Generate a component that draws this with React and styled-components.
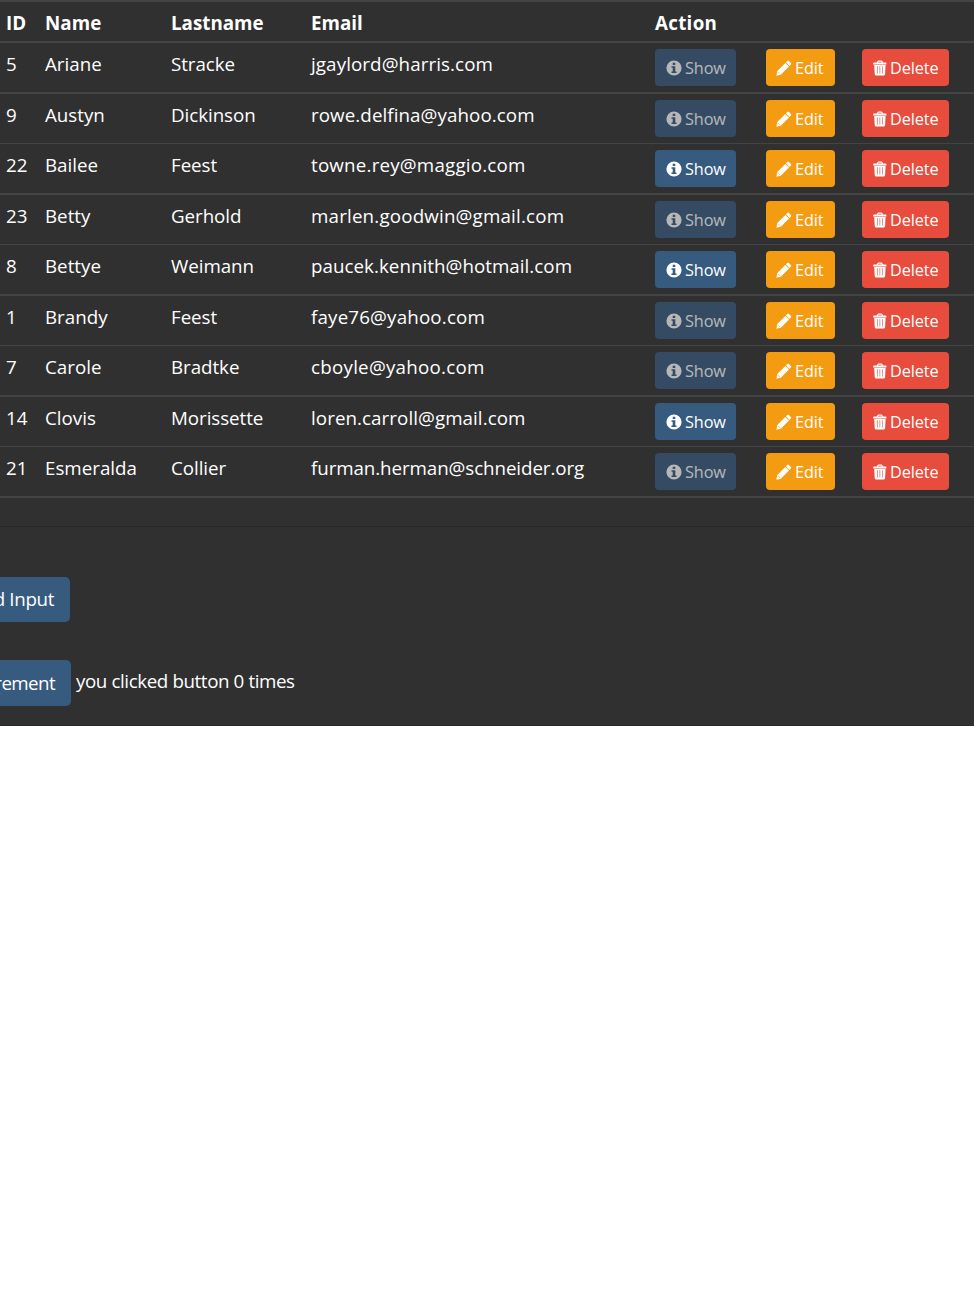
import React, { useState } from 'react';
import styled, { createGlobalStyle, css } from 'styled-components';

const GlobalStyle = createGlobalStyle`
  *, *::before, *::after { box-sizing: border-box; }
  html, body { margin: 0; padding: 0; background: #fff; }
  body {
    font-family: 'Segoe UI', 'Open Sans', 'Noto Sans', sans-serif;
    font-size: 18.75px;
    line-height: 27px;
    color: #fff;
    overflow: hidden;
  }
`;

const Page = styled.main`
  height: 726px;
  background: #303030;
  border-bottom: 1px solid #282828;
  overflow: hidden;
`;

const Table = styled.div`
  border-top: 2px solid #444;
`;

const Row = styled.div`
  display: grid;
  grid-template-columns: 39px 126px 140px 344px 111px 96px 1fr;
  height: ${(p) => 49 + p.$line}px;
  border-bottom: ${(p) => p.$line}px solid #444;
`;

const HeaderRow = styled(Row)`
  height: 41px;
  font-weight: 700;
`;

const Cell = styled.div`
  padding: 7px 0 0 6px;
  white-space: nowrap;
  letter-spacing: ${(p) => p.$track || 0}px;
`;

const ActionCell = styled.div`
  padding: 6px 0 0 6px;
`;

const buttonTones = {
  primary: '#375a7f',
  warning: '#f39c12',
  danger: '#e74c3c',
};

const SmallButton = styled.button`
  display: flex;
  align-items: center;
  width: ${(p) => p.$width}px;
  height: 37px;
  padding: 1px 0 0 ${(p) => p.$pad || 11}px;
  gap: 3px;
  border: 0;
  border-radius: 4px;
  background: ${(p) => buttonTones[p.$tone]};
  color: #fff;
  font: inherit;
  font-size: 16.25px;
  letter-spacing: -0.1px;
  white-space: nowrap;
  ${(p) => p.disabled && css`opacity: 0.65;`}
`;

const Glyph = styled.svg`
  display: block;
  flex: none;
  width: ${(p) => p.$w}px;
  height: 16px;
  overflow: visible;
`;

const Divider = styled.hr`
  height: 1px;
  margin: 28px 0 50px;
  border: 0;
  background: #282828;
`;

const Line = styled.div`
  display: flex;
  align-items: flex-start;
  margin-bottom: ${(p) => p.$after}px;
`;

const Button = styled.button`
  width: ${(p) => p.$width}px;
  height: ${(p) => p.$height}px;
  margin-left: ${(p) => p.$shift}px;
  padding: 0 16px 2px 0;
  border: 0;
  border-radius: 5px;
  background: #375a7f;
  color: #fff;
  font: inherit;
  letter-spacing: ${(p) => p.$track}px;
  text-align: right;
  white-space: nowrap;
`;

const Counter = styled.span`
  padding: 7px 0 0 5px;
  letter-spacing: -0.4px;
`;

const InfoIcon = () => (
  <Glyph $w={16} viewBox="0 0 16 16">
    <path fill="currentColor" fillRule="evenodd" d="M8 .4a7.6 7.6 0 1 0 0 15.2a7.6 7.6 0 0 0 0-15.2zM6.7 2.7h2.6v2.2H6.7zM5.5 6.3h3.8v5.1h1.2v1.5h-5v-1.5h1.2V7.7H5.5z" />
  </Glyph>
);

const PencilIcon = () => (
  <Glyph $w={16} viewBox="0 0 16 16">
    <path fill="currentColor" d="M11.3.9q.8-.8 1.6 0l2 2q.8.8 0 1.6l-1.4 1.4-3.6-3.6zM9.3 2.9l3.7 3.6-8.2 8.2L.4 15.7l.9-4.6z" />
    <path fill="none" stroke="#f39c12" strokeWidth=".6" d="M1.9 11.8l2.4 2.4" />
  </Glyph>
);

const TrashIcon = () => (
  <Glyph $w={14} viewBox="0 0 14 16">
    <path fill="currentColor" fillRule="evenodd" d="M3.8 2.4l.7-1.4q.3-.5.9-.5h3q.6 0 .9.5l.7 1.4h2.5q.9 0 .9.9v1.2H.2V3.3q0-.9.9-.9zM5.4 1.7l-.3.7h3.6l-.3-.7zM1.2 5h11.4l-.5 9q-.1 1.5-1.5 1.5H3.2q-1.4 0-1.5-1.5zM4.1 6.3v7.2h.6V6.3zM6.6 6.3v7.2h.6V6.3zM9.1 6.3v7.2h.6V6.3z" />
  </Glyph>
);

const people = [
  { id: 5, name: 'Ariane', last: 'Stracke', email: 'jgaylord@harris.com', track: 0.1, on: false },
  { id: 9, name: 'Austyn', last: 'Dickinson', email: 'rowe.delfina@yahoo.com', track: 0.08, on: false },
  { id: 22, name: 'Bailee', last: 'Feest', email: 'towne.rey@maggio.com', track: 0.2, on: true },
  { id: 23, name: 'Betty', last: 'Gerhold', email: 'marlen.goodwin@gmail.com', track: 0.18, on: false },
  { id: 8, name: 'Bettye', last: 'Weimann', email: 'paucek.kennith@hotmail.com', track: 0.04, on: true },
  { id: 1, name: 'Brandy', last: 'Feest', email: 'faye76@yahoo.com', track: 0.17, on: false },
  { id: 7, name: 'Carole', last: 'Bradtke', email: 'cboyle@yahoo.com', track: 0.25, on: false },
  { id: 14, name: 'Clovis', last: 'Morissette', email: 'loren.carroll@gmail.com', track: 0.07, on: true },
  { id: 21, name: 'Esmeralda', last: 'Collier', email: 'furman.herman@schneider.org', track: -0.08, on: false },
];

export default function App() {
  const [count, setCount] = useState(0);
  return (
    <>
      <GlobalStyle />
      <Page>
        <Table>
          <HeaderRow $line={2}>
            <Cell>ID</Cell>
            <Cell $track={0.1}>Name</Cell>
            <Cell>Lastname</Cell>
            <Cell>Email</Cell>
            <Cell $track={0.3}>Action</Cell>
          </HeaderRow>
          {people.map((p, i) => (
            <Row key={p.id} $line={i % 2 ? 1 : 2}>
              <Cell>{p.id}</Cell>
              <Cell>{p.name}</Cell>
              <Cell $track={-0.05}>{p.last}</Cell>
              <Cell $track={p.track}>{p.email}</Cell>
              <ActionCell>
                <SmallButton $tone="primary" $width={81} disabled={!p.on}><InfoIcon />Show</SmallButton>
              </ActionCell>
              <ActionCell>
                <SmallButton $tone="warning" $width={69} $pad={10}><PencilIcon />Edit</SmallButton>
              </ActionCell>
              <ActionCell>
                <SmallButton $tone="danger" $width={87}><TrashIcon />Delete</SmallButton>
              </ActionCell>
            </Row>
          ))}
        </Table>
        <Divider />
        <Line $after={38}>
          <Button $width={110} $height={45} $shift={-40} $track={-0.35}>Add Input</Button>
        </Line>
        <Line $after={0}>
          <Button $width={126} $height={46} $shift={-55} $track={-0.6} onClick={() => setCount(count + 1)}>Increment</Button>
          <Counter>you clicked button {count} times</Counter>
        </Line>
      </Page>
    </>
  );
}
